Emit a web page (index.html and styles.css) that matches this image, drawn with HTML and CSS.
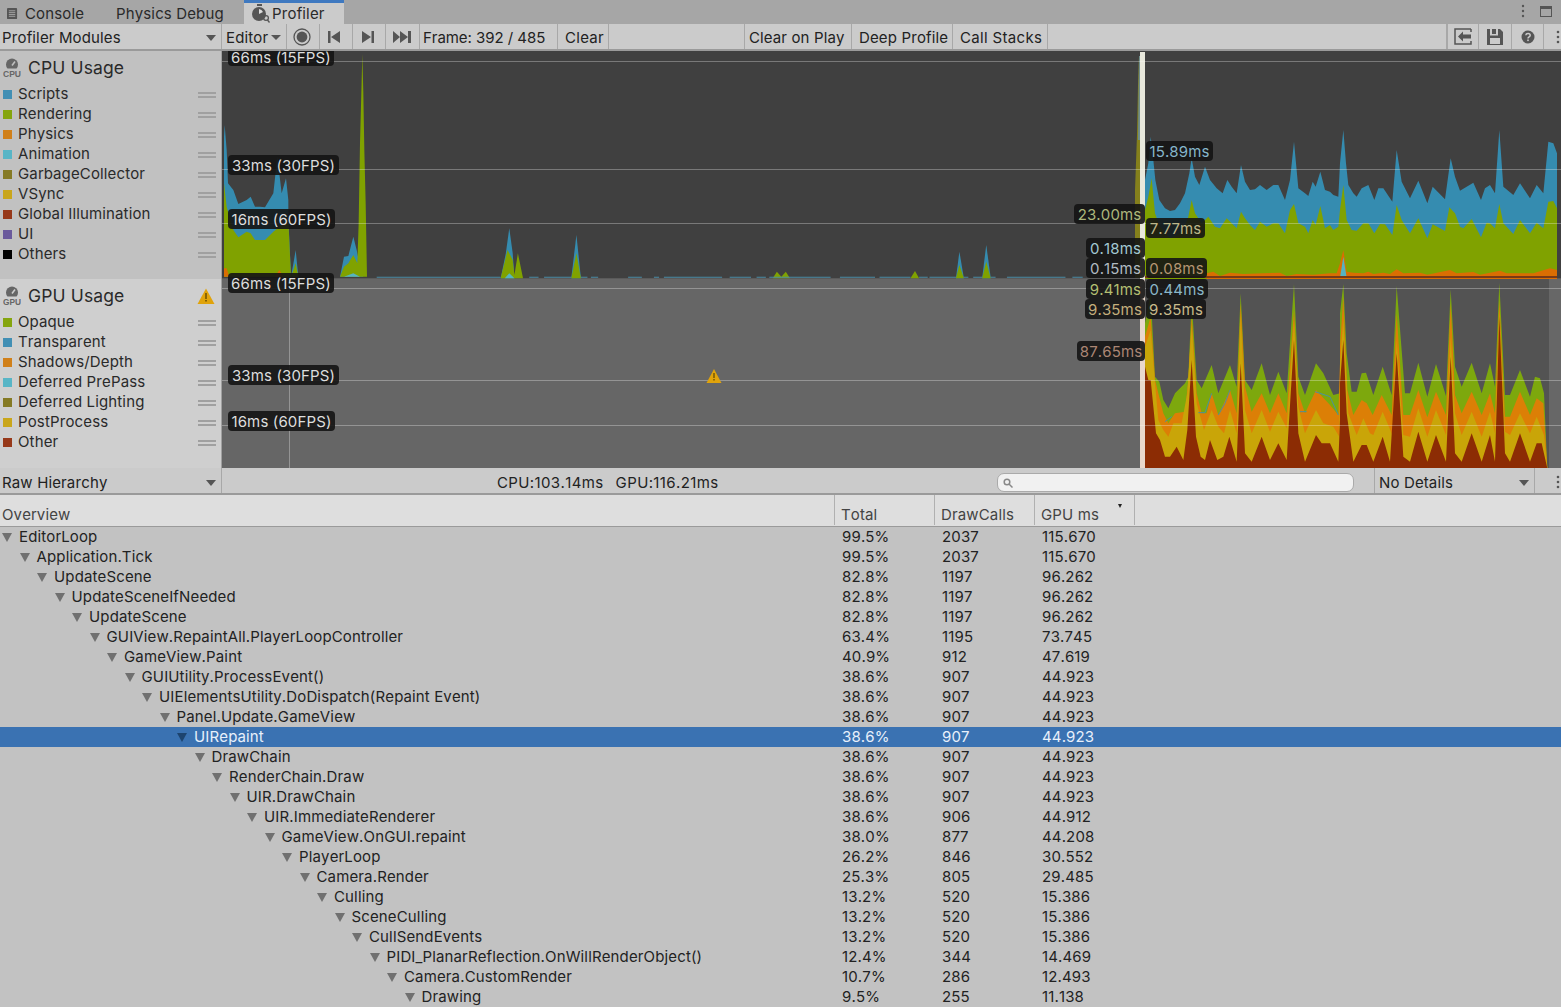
FILE: index.html
```html
<!DOCTYPE html>
<html lang="en">
<head>
<meta charset="utf-8">
<title>Profiler</title>
<link rel="stylesheet" href="styles.css">
</head>
<body>
<div class="tabbar">
  <div class="tab"><svg class="tab-icon" viewBox="0 0 12 13"><rect x="0" y="0" width="11" height="12" rx="1" fill="#555"/><path d="M2 3h7M2 5h7M2 7h7M2 9h7" stroke="#a6a6a6" stroke-width="1"/></svg><span>Console</span></div>
  <div class="tab tab-physics"><span>Physics Debug</span></div>
  <div class="tab tab-active"><svg class="tab-icon-prof" viewBox="0 0 19 19"><path d="M6 0h5v2H6z" fill="#555"/><circle cx="8" cy="10" r="7" fill="#555"/><path d="M8 10V5a5 5 0 0 1 4 3z" fill="#ddd"/><circle cx="15" cy="14" r="2.4" fill="none" stroke="#555" stroke-width="1.3"/><path d="M16.5 16l2 2.5" stroke="#555" stroke-width="1.3"/></svg><span>Profiler</span></div>
  <div class="tab-tools">
    <svg class="kebab" viewBox="0 0 4 14"><circle cx="2" cy="2" r="1.2"/><circle cx="2" cy="7" r="1.2"/><circle cx="2" cy="12" r="1.2"/></svg>
    <svg class="winicon" viewBox="0 0 12 11"><rect x=".5" y=".5" width="11" height="10" fill="none" stroke="#555"/><rect x="0" y="0" width="12" height="3" fill="#555"/></svg>
  </div>
</div>

<div class="toolbar top-toolbar">
  <div class="tb-cell modules">Profiler Modules<i class="caret"></i></div>
  <div class="tb-cell editor">Editor<i class="caret caret-sm"></i></div>
  <div class="tb-cell icon w33 nudge-1"><svg width="20" height="20" viewBox="0 0 20 20"><circle cx="10" cy="10" r="8" fill="none" stroke="#555" stroke-width="1.3"/><circle cx="10" cy="10" r="5.4" fill="#555"/></svg></div>
  <div class="tb-cell icon w33 nudge-2"><svg width="14" height="12" viewBox="0 0 14 12"><path d="M1 0h2.5v12H1zM13 0v12L4 6z" fill="#555"/></svg></div>
  <div class="tb-cell icon w33 nudge-1"><svg width="14" height="12" viewBox="0 0 14 12"><path d="M1 0v12l9-6zM10.5 0H13v12h-2.500z" fill="#555"/></svg></div>
  <div class="tb-cell icon w34"><svg width="19" height="12" viewBox="0 0 19 12"><path d="M0 0v12l7-6zM7 0v12l8-6zM15 0h3v12h-3z" fill="#555"/></svg></div>
  <div class="tb-cell frame">Frame: 392 / 485</div>
  <div class="tb-cell clear">Clear</div>
  <div class="tb-fill tb-gap"></div>
  <div class="tb-cell clearplay">Clear on Play</div>
  <div class="tb-cell deep">Deep Profile</div>
  <div class="tb-cell calls">Call Stacks</div>
  <div class="tb-fill"></div>
  <div class="tb-cell icon w31 first-icon"><svg width="18" height="17" viewBox="0 0 18 17"><path d="M17 1H1v15h16v-3M17 4V1" fill="none" stroke="#555" stroke-width="1.500"/><path d="M4 8.500l5-5v3h8v4H9v3z" fill="#555"/></svg></div>
  <div class="tb-cell icon w33"><svg width="16" height="16" viewBox="0 0 16 16"><path d="M0 0h13l3 3v13H0z" fill="#555"/><path d="M3 0h2v5h4V0h2v6.500H3zM3 9h10v6H3z" fill="#cbcbcb"/></svg></div>
  <div class="tb-cell icon w32"><svg width="14" height="14" viewBox="0 0 14 14"><circle cx="7" cy="7" r="6.500" fill="#555"/><path d="M4.800 5.200C5 3 9.200 3 9.200 5.300 9.200 7 7 6.800 7 8.500" fill="none" stroke="#cbcbcb" stroke-width="1.500"/><rect x="6.200" y="9.500" width="1.600" height="1.600" fill="#cbcbcb"/></svg></div>
  <div class="tb-end"><svg class="kebab" viewBox="0 0 4 14"><circle cx="2" cy="2" r="1.300"/><circle cx="2" cy="7" r="1.300"/><circle cx="2" cy="12" r="1.300"/></svg></div>
</div>

<div class="module module-cpu">
  <aside class="legend legend-cpu">
    <h2 class="legend-title"><svg class="chip" viewBox="0 0 18 19"><path d="M4.500 10.500a6 6 0 1 1 9 0z" fill="#666"/><path d="M9 7.500l3-4" stroke="#c0c0c0" stroke-width="1.600"/><text x="0" y="18.500" class="chip-text" textLength="18" lengthAdjust="spacingAndGlyphs">CPU</text></svg>CPU Usage</h2>
    <ul class="legend-list">
      <li><i class="sw c-blue"></i>Scripts<b class="grip"></b></li>
      <li><i class="sw c-green"></i>Rendering<b class="grip"></b></li>
      <li><i class="sw c-orange"></i>Physics<b class="grip"></b></li>
      <li><i class="sw c-teal"></i>Animation<b class="grip"></b></li>
      <li><i class="sw c-olive"></i>GarbageCollector<b class="grip"></b></li>
      <li><i class="sw c-yellow"></i>VSync<b class="grip"></b></li>
      <li><i class="sw c-red"></i>Global Illumination<b class="grip"></b></li>
      <li><i class="sw c-purple"></i>UI<b class="grip"></b></li>
      <li><i class="sw c-black"></i>Others<b class="grip"></b></li>
    </ul>
  </aside>
  <div class="chart chart-clip">
    <svg class="chart-svg" viewBox="222 51 1339 228" preserveAspectRatio="none">
      <rect x="222" y="51" width="1339" height="228" fill="#404040"/>
      <rect x="222" y="278" width="1339" height="1" fill="#5a5a5a"/>
      <g transform="translate(220 50) scale(.33333)">
        <polygon class="f-blue" points="12,680 12,260 14,225 20,300 24,400 40,420 55,462 80,450 92,440 105,470 120,470 135,472 160,430 172,320 185,430 198,385 205,450 205,500 213,680 222,630 227,600 235,680"/>
        <polygon class="f-blue" points="360,680 372,620 385,618 400,560 410,600 418,640 430,680"/>
        <polygon class="f-green" points="12,680 12,400 20,470 40,540 55,562 80,545 92,550 105,570 135,570 160,545 205,510 213,680 222,655 227,640 235,680"/>
        <polygon class="f-green" points="360,680 372,650 385,640 400,615 412,640 416,520 420,280 424,130 427,12 430,130 433,300 437,460 441,680"/>
        <polygon class="f-orange" points="12,680 12,655 20,655 28,680"/>
        <polygon class="f-orange" points="165,680 178,660 190,680"/>
        <polygon class="f-teal" points="372,680 400,670 420,680"/>
      </g>
      <g transform="translate(480 220) scale(.3444 .33333)">
        <polygon class="f-blue" points="60,175 75,100 85,25 95,100 100,175"/>
        <polygon class="f-green" points="60,175 80,90 95,120 100,165 110,100 125,175"/>
        <polygon class="f-teal" points="72,175 85,160 100,175"/>
        <polygon class="f-blue" points="265,175 280,45 293,175"/>
        <polygon class="f-green" points="265,175 280,100 293,175"/>
        <polygon class="f-green" points="850,175 862,155 875,170 888,155 900,175"/>
        <polygon class="f-green" points="1250,175 1263,153 1275,175"/>
        <polygon class="f-blue" points="1382,175 1392,95 1405,175"/>
        <polygon class="f-green" points="1382,175 1392,135 1405,175"/>
        <polygon class="f-blue" points="1458,175 1470,75 1483,175"/>
        <polygon class="f-green" points="1458,175 1470,125 1483,175"/>
        <path class="s-blue" d="M-300 172H60M143 172H170M186 172H265M293 172H312M322 172H343M430 172H470M505 172H520M534 172H703M725 172H787M803 172H830M840 172H1018M1045 172H1147M1160 172H1250M1275 172H1300M1305 172H1382M1405 172H1418M1432 172H1458M1483 172H1497M1530 172H1700M1720 172H1750"/>
      </g>
      <polygon points="1135,278 1135,190 1137,135 1138,85 1139,56 1140,56 1140,278" fill="#85801c"/>
      <polygon points="1138,140 1139,56 1140,56 1140,140" fill="#6f8d8c"/>
      <g transform="translate(1130 130) scale(.33333)">
        <polygon class="f-blue" points="45,450 45,150 55,100 62,20 70,90 76,150 88,210 105,235 120,243 135,240 150,220 165,190 178,130 185,85 195,140 208,165 225,110 240,150 260,175 278,190 292,150 305,170 320,190 333,105 345,155 360,180 375,178 390,165 410,180 430,165 445,165 465,210 480,150 492,35 505,175 525,190 535,198 548,155 557,170 571,125 585,180 600,185 610,195 625,200 630,100 630,450"/>
        <polygon class="f-green" points="45,450 45,240 55,200 65,145 75,250 90,290 120,325 140,315 160,300 175,260 185,210 195,250 215,280 235,260 255,290 270,295 290,265 305,280 320,295 333,245 345,265 360,285 375,300 390,275 410,290 430,280 445,280 465,310 480,240 492,222 505,280 525,290 535,310 548,270 557,285 571,228 585,295 600,285 610,300 625,290 630,240 630,450"/>
        <polygon class="f-orange" points="45,450 230,450 230,430 250,425 270,438 300,428 340,432 400,430 450,428 470,438 500,432 550,434 600,430 620,430 630,400 630,450"/>
      </g>
      <g transform="translate(1340 130) scale(.33333)">
        <polygon class="f-blue" points="0,450 0,100 10,0 18,100 25,165 40,190 50,200 65,175 85,165 103,210 115,175 130,175 157,215 170,60 185,155 210,205 235,152 262,220 278,170 315,208 332,85 345,140 360,182 400,158 423,210 435,175 450,165 465,190 478,0 490,170 520,195 540,160 570,205 590,165 610,190 625,35 640,40 651,70 651,450"/>
        <polygon class="f-green" points="0,450 0,240 10,165 20,270 35,300 50,302 70,280 85,280 103,310 120,282 135,283 157,315 170,225 185,270 210,310 235,265 262,325 278,283 315,303 328,232 345,250 360,290 370,295 395,267 423,322 440,278 450,280 465,295 478,222 490,280 520,312 540,270 570,310 590,278 610,295 625,215 640,213 651,235 651,450"/>
        <polygon class="f-orange" points="0,450 0,400 10,360 20,425 40,428 70,430 85,425 100,432 130,428 150,432 170,418 190,430 240,428 262,434 330,420 350,430 400,426 420,434 480,422 500,430 580,430 630,415 651,420 651,450"/>
        <polygon class="f-teal" points="0,443 10,380 20,443"/>
      </g>
      <rect x="1145" y="276" width="412" height="2" fill="#7a3a14"/>
      <rect x="1140" y="52" width="5" height="227" fill="#e8e8dc"/>
      <path class="gridline" d="M222 61.500H1561M222 169.500H1561M222 223.500H1561"/>
    </svg>
    <span class="tag tag-fps t-a">66ms (15FPS)</span>
    <span class="tag tag-fps t-b">33ms (30FPS)</span>
    <span class="tag tag-fps t-c">16ms (60FPS)</span>
    <span class="tag v1 l-blue">15.89ms</span>
    <span class="tag v2 l-tan">7.77ms</span>
    <span class="tag v3 l-green">23.00ms</span>
    <span class="tag v4 l-cyan">0.18ms</span>
    <span class="tag v5 l-grey">0.15ms</span>
    <span class="tag v6 l-brown">0.08ms</span>
  </div>
</div>

<div class="module module-gpu">
  <aside class="legend legend-gpu">
    <h2 class="legend-title"><svg class="chip" viewBox="0 0 18 19"><path d="M4.500 10.500a6 6 0 1 1 9 0z" fill="#666"/><path d="M9 7.500l3-4" stroke="#cecece" stroke-width="1.600"/><text x="0" y="18.500" class="chip-text" textLength="18" lengthAdjust="spacingAndGlyphs">GPU</text></svg>GPU Usage<svg class="warn" viewBox="0 0 18 16"><path d="M9 0.500L17.500 16H.5z" fill="#e0a30b"/><path d="M9 5v6" stroke="#5a4300" stroke-width="1.300"/><rect x="8.300" y="12" width="1.400" height="1.500" fill="#5a4300"/></svg></h2>
    <ul class="legend-list">
      <li><i class="sw c-green"></i>Opaque<b class="grip"></b></li>
      <li><i class="sw c-blue"></i>Transparent<b class="grip"></b></li>
      <li><i class="sw c-orange"></i>Shadows/Depth<b class="grip"></b></li>
      <li><i class="sw c-teal"></i>Deferred PrePass<b class="grip"></b></li>
      <li><i class="sw c-olive"></i>Deferred Lighting<b class="grip"></b></li>
      <li><i class="sw c-yellow"></i>PostProcess<b class="grip"></b></li>
      <li><i class="sw c-red"></i>Other<b class="grip"></b></li>
    </ul>
  </aside>
  <div class="chart">
    <svg class="chart-svg" viewBox="222 279 1339 189" preserveAspectRatio="none">
      <rect x="222" y="279" width="918" height="189" fill="#666"/>
      <rect x="1145" y="279" width="404" height="189" fill="#535353"/>
      <rect x="1549" y="279" width="12" height="189" fill="#676767"/>
      <g transform="translate(1130 280) scale(.33333)">
        <polygon class="f-lime" points="45,565 45,130 62,40 75,290 88,305 100,360 115,385 135,340 165,310 175,290 185,60 200,300 215,325 245,255 265,340 300,255 320,320 332,40 345,300 365,330 395,250 420,345 445,275 470,340 492,12 505,290 525,345 558,250 580,280 610,345 630,340 630,565"/>
        <polygon class="f-orange2" points="45,565 45,170 62,110 75,300 90,360 100,400 115,430 135,400 165,395 175,300 185,110 200,340 215,400 230,400 245,340 265,405 300,330 320,400 332,70 345,320 365,395 395,340 420,400 445,340 470,400 492,90 505,340 525,400 558,330 600,375 625,405 630,250 630,565"/>
        <polygon class="f-gold" points="45,565 45,200 62,150 75,310 85,420 100,450 115,470 130,430 155,430 172,340 185,135 200,370 222,450 245,390 265,440 282,460 300,390 320,460 332,100 345,390 365,460 395,390 420,455 445,395 470,445 492,120 505,380 525,460 558,390 580,430 610,440 628,470 630,300 630,565"/>
        <polygon class="f-rust" points="45,565 45,260 55,300 62,300 72,400 78,460 90,480 105,530 120,530 140,500 160,540 172,450 185,240 198,470 212,530 225,540 240,480 262,540 280,530 298,470 320,545 332,250 345,520 365,545 395,470 420,540 445,490 470,540 492,180 505,460 525,545 558,465 575,490 600,490 625,545 630,420 630,565"/>
        <path class="s-teal" d="M105 425L125 410M205 398H225L245 340M265 405L285 370L300 330M510 395H530M555 335L600 350L625 405"/>
      </g>
      <g transform="translate(1340 280) scale(.33333)">
        <polygon class="f-lime" points="0,565 0,100 10,12 20,220 35,335 50,335 65,280 78,278 100,345 128,260 155,345 170,18 195,340 210,340 235,248 262,350 288,252 318,348 332,28 345,260 365,320 395,248 425,340 450,250 465,320 478,8 495,345 510,345 540,270 570,350 585,290 600,295 612,340 622,565"/>
        <polygon class="f-orange2" points="0,565 0,200 10,50 22,330 40,405 65,360 80,370 98,405 125,345 155,405 170,100 190,405 210,405 235,330 262,412 288,335 318,405 332,70 345,345 365,400 395,335 425,405 450,340 465,400 478,60 495,410 510,410 540,335 570,405 590,355 610,370 622,565"/>
        <polygon class="f-gold" points="0,565 0,250 10,120 25,400 50,465 70,415 90,460 100,465 128,395 157,465 170,180 190,465 210,470 235,385 262,470 288,390 318,465 332,170 345,400 365,465 395,395 425,470 450,395 465,460 478,100 495,455 510,465 540,400 570,460 590,410 612,465 622,565"/>
        <polygon class="f-rust" points="0,565 0,310 10,180 20,400 40,545 65,495 80,495 100,545 128,470 150,545 170,220 190,530 210,545 235,455 262,545 288,465 318,545 332,230 345,520 365,545 395,460 425,545 450,465 465,545 478,110 495,520 510,545 540,460 570,545 590,490 605,490 622,565"/>
      </g>
      <rect x="1140" y="279" width="5" height="189" fill="#e9d8cc"/>
      <path class="gridline" d="M222 288.500H1561M222 380.500H1561M222 425.500H1561M289.500 279V468"/>
      <path d="M714 369l7.500 14h-15z" fill="#e0a30b"/>
      <path d="M714 373v5" stroke="#5a4300" stroke-width="1.200"/>
      <rect x="713.400" y="379" width="1.200" height="1.500" fill="#5a4300"/>
    </svg>
    <span class="tag tag-fps g-a">66ms (15FPS)</span>
    <span class="tag tag-fps g-b">33ms (30FPS)</span>
    <span class="tag tag-fps g-c">16ms (60FPS)</span>
    <span class="tag v7 l-lime">9.41ms</span>
    <span class="tag v8 l-sky">0.44ms</span>
    <span class="tag v9 l-sand">9.35ms</span>
    <span class="tag v10 l-sand2">9.35ms</span>
    <span class="tag v11 l-rust">87.65ms</span>
  </div>
</div>

<div class="toolbar bottom-toolbar">
  <div class="tb-cell modules">Raw Hierarchy<i class="caret"></i></div>
  <div class="stats"><span class="stat-cpu">CPU:103.14ms</span><span class="stat-gpu">GPU:116.21ms</span></div>
  <div class="search"><svg width="10" height="10" viewBox="0 0 10 10"><circle cx="4" cy="4" r="2.800" fill="none" stroke="#888" stroke-width="1.500"/><path d="M6 6l3.500 3.500" stroke="#888" stroke-width="1.500"/></svg></div>
  <div class="tb-cell details">No Details<i class="caret"></i></div>
  <div class="tb-end"><svg class="kebab" viewBox="0 0 4 14"><circle cx="2" cy="2" r="1.300"/><circle cx="2" cy="7" r="1.300"/><circle cx="2" cy="12" r="1.300"/></svg></div>
</div>

<div class="table-head">
  <div class="th th-name">Overview</div>
  <div class="th">Total</div>
  <div class="th">DrawCalls</div>
  <div class="th th-sort">GPU ms<i class="sort"></i></div>
</div>

<div class="table-body">
  <div class="row"><div class="name" style="--d:0"><i class="arrow"></i>EditorLoop</div><div>99.5%</div><div>2037</div><div>115.670</div></div>
  <div class="row"><div class="name" style="--d:1"><i class="arrow"></i>Application.Tick</div><div>99.5%</div><div>2037</div><div>115.670</div></div>
  <div class="row"><div class="name" style="--d:2"><i class="arrow"></i>UpdateScene</div><div>82.8%</div><div>1197</div><div>96.262</div></div>
  <div class="row"><div class="name" style="--d:3"><i class="arrow"></i>UpdateSceneIfNeeded</div><div>82.8%</div><div>1197</div><div>96.262</div></div>
  <div class="row"><div class="name" style="--d:4"><i class="arrow"></i>UpdateScene</div><div>82.8%</div><div>1197</div><div>96.262</div></div>
  <div class="row"><div class="name" style="--d:5"><i class="arrow"></i>GUIView.RepaintAll.PlayerLoopController</div><div>63.4%</div><div>1195</div><div>73.745</div></div>
  <div class="row"><div class="name" style="--d:6"><i class="arrow"></i>GameView.Paint</div><div>40.9%</div><div>912</div><div>47.619</div></div>
  <div class="row"><div class="name" style="--d:7"><i class="arrow"></i>GUIUtility.ProcessEvent()</div><div>38.6%</div><div>907</div><div>44.923</div></div>
  <div class="row"><div class="name" style="--d:8"><i class="arrow"></i>UIElementsUtility.DoDispatch(Repaint Event)</div><div>38.6%</div><div>907</div><div>44.923</div></div>
  <div class="row"><div class="name" style="--d:9"><i class="arrow"></i>Panel.Update.GameView</div><div>38.6%</div><div>907</div><div>44.923</div></div>
  <div class="row row-selected"><div class="name" style="--d:10"><i class="arrow"></i>UIRepaint</div><div>38.6%</div><div>907</div><div>44.923</div></div>
  <div class="row"><div class="name" style="--d:11"><i class="arrow"></i>DrawChain</div><div>38.6%</div><div>907</div><div>44.923</div></div>
  <div class="row"><div class="name" style="--d:12"><i class="arrow"></i>RenderChain.Draw</div><div>38.6%</div><div>907</div><div>44.923</div></div>
  <div class="row"><div class="name" style="--d:13"><i class="arrow"></i>UIR.DrawChain</div><div>38.6%</div><div>907</div><div>44.923</div></div>
  <div class="row"><div class="name" style="--d:14"><i class="arrow"></i>UIR.ImmediateRenderer</div><div>38.6%</div><div>906</div><div>44.912</div></div>
  <div class="row"><div class="name" style="--d:15"><i class="arrow"></i>GameView.OnGUI.repaint</div><div>38.0%</div><div>877</div><div>44.208</div></div>
  <div class="row"><div class="name" style="--d:16"><i class="arrow"></i>PlayerLoop</div><div>26.2%</div><div>846</div><div>30.552</div></div>
  <div class="row"><div class="name" style="--d:17"><i class="arrow"></i>Camera.Render</div><div>25.3%</div><div>805</div><div>29.485</div></div>
  <div class="row"><div class="name" style="--d:18"><i class="arrow"></i>Culling</div><div>13.2%</div><div>520</div><div>15.386</div></div>
  <div class="row"><div class="name" style="--d:19"><i class="arrow"></i>SceneCulling</div><div>13.2%</div><div>520</div><div>15.386</div></div>
  <div class="row"><div class="name" style="--d:20"><i class="arrow"></i>CullSendEvents</div><div>13.2%</div><div>520</div><div>15.386</div></div>
  <div class="row"><div class="name" style="--d:21"><i class="arrow"></i>PIDI_PlanarReflection.OnWillRenderObject()</div><div>12.4%</div><div>344</div><div>14.469</div></div>
  <div class="row"><div class="name" style="--d:22"><i class="arrow"></i>Camera.CustomRender</div><div>10.7%</div><div>286</div><div>12.493</div></div>
  <div class="row"><div class="name" style="--d:23"><i class="arrow"></i>Drawing</div><div>9.5%</div><div>255</div><div>11.138</div></div>
</div>
</body>
</html>
```
FILE: styles.css
```css
* { box-sizing: border-box; }
html, body { margin: 0; padding: 0; height: 100%; }
body { width: 1561px; height: 1007px; overflow: hidden; background: #c2c2c2; color: #222; font-family: Inter, "Liberation Sans", sans-serif; font-size: 15px; line-height: 20px; letter-spacing: .14px; font-kerning: none; }

.tabbar { height: 24px; background: #a6a6a6; display: flex; align-items: stretch; }
.tab { display: flex; align-items: center; color: #2a2a2a; padding-top: 3px; }
.tab:first-child { width: 116px; padding-left: 7px; }
.tab-icon { width: 11px; height: 12px; margin-right: 7px; }
.tab-physics { width: 128px; }
.tab-active { width: 100px; background: #cbcbcb; border-top: 3px solid #3f79c0; margin-top: 0; padding: 0 0 0 7px; }
.tab-icon-prof { width: 19px; height: 19px; margin-right: 2px; }
.tab-tools { margin-left: auto; display: flex; align-items: center; padding-bottom: 2px; }
.kebab { width: 4px; height: 14px; fill: #555; }
.tab-tools .kebab { margin-right: 15px; }
.winicon { width: 12px; height: 11px; margin-right: 9px; }

.toolbar { display: flex; background: #cbcbcb; border-bottom: 2px solid #9a9a9a; }
.top-toolbar { height: 27px; }
.bottom-toolbar { height: 27px; }
.tb-cell { display: flex; align-items: center; border-right: 1px solid #a8a8a8; padding: 2px 0 0 2px; white-space: nowrap; }
.bottom-toolbar .tb-cell { padding-top: 4px; }
.tb-fill { flex: 1; border-right: 1px solid #a8a8a8; }
.tb-gap { flex: 0 0 136px; }
.modules { width: 222px; }
.caret { margin-left: auto; margin-right: 5px; width: 0; height: 0; border-left: 5.500px solid transparent; border-right: 5.500px solid transparent; border-top: 6px solid #555; }
.caret-sm { margin-left: 3px; margin-right: 5px; border-left-width: 5px; border-right-width: 5px; border-top-width: 5px; }
.editor { width: 65px; padding-left: 4px; }
.icon { justify-content: center; padding: 0; }
.nudge-1 { padding-right: 2px; }
.nudge-2 { padding-right: 4px; }
.w33 { width: 33px; } .w34 { width: 34px; } .w31 { width: 31px; } .w32 { width: 32px; }
.frame { width: 138px; padding-left: 3px; letter-spacing: -.05px; }
.clear { width: 51px; padding-left: 7px; letter-spacing: .3px; }
.clearplay { width: 107px; padding-left: 4px; }
.deep { width: 101px; padding-left: 7px; }
.calls { width: 95px; padding-left: 7px; letter-spacing: .35px; }
.first-icon { border-left: 1px solid #a8a8a8; width: 32px; }
.tb-end { width: 17px; display: flex; align-items: center; padding-left: 12px; }

.module { display: flex; }
.module-cpu { height: 228px; }
.module-gpu { height: 189px; }
.legend { width: 222px; border-right: 1px solid #a0a0a0; flex: none; }
.legend-cpu { background: #c1c1c1; }
.legend-gpu { background: #cfcfcf; }
.legend-title { margin: 0; height: 33px; padding: 0 6px 0 3px; display: flex; align-items: center; font-size: 17.500px; font-weight: 400; color: #2a2a2a; }
.chip { width: 18px; height: 19px; margin-right: 7px; flex: none; }
.chip-text { font-family: "Liberation Sans", sans-serif; font-size: 8.500px; font-weight: 700; fill: #666; letter-spacing: 0; }
.warn { width: 18px; height: 16px; margin-left: auto; }
.legend-list { list-style: none; margin: 0; padding: 0; }
.legend-list li { height: 20px; display: flex; align-items: center; padding-left: 3px; color: #2a2a2a; }
.sw { width: 9px; height: 9px; margin-right: 6px; flex: none; }
.grip { margin: 2px 5px 0 auto; width: 18px; height: 6px; border-top: 2px solid #a0a0a0; border-bottom: 2px solid #a0a0a0; }
.c-blue { background: #428fb4; } .c-green { background: #85a50f; } .c-orange { background: #d0801a; }
.c-teal { background: #58b5c6; } .c-olive { background: #857a25; } .c-yellow { background: #c9a61c; }
.c-red { background: #97391a; } .c-purple { background: #6a5a9c; } .c-black { background: #000; }

.chart { position: relative; flex: 1; }
.chart-clip { overflow: hidden; }
.chart-svg { display: block; width: 100%; height: 100%; }
.gridline { stroke: #fff; stroke-opacity: .3; stroke-width: 1; fill: none; }
.f-blue { fill: #358cb0; } .f-green { fill: #80a200; } .f-orange { fill: #da6e02; } .f-teal { fill: #55b3c2; }
.f-lime { fill: #7da80d; } .f-orange2 { fill: #dc7f06; } .f-gold { fill: #c9a508; } .f-rust { fill: #8c2c04; }
.s-blue { stroke: #4a8ba5; stroke-width: 3; fill: none; }
.s-teal { stroke: #4d8f9e; stroke-width: 3; fill: none; }

.tag { position: absolute; background: rgba(20,20,20,.9); border-radius: 4px; height: 20px; line-height: 22px; white-space: nowrap; color: #dedede; text-align: center; }
.tag-fps { left: 6px; }
.t-a { top: -4px; width: 106px; height: 19px; line-height: 21px; } .t-b { top: 104px; width: 111px; } .t-c { top: 158px; width: 107px; }
.g-a { top: -6px; width: 106px; } .g-b { top: 86px; width: 111px; } .g-c { top: 132px; width: 107px; }
.v1 { left: 924px; top: 90px; width: 67px; } .v2 { left: 924px; top: 167px; width: 59px; }
.v3 { left: 852px; top: 153px; width: 71px; } .v4 { left: 864px; top: 187px; width: 59px; }
.v5 { left: 864px; top: 207px; width: 59px; } .v6 { left: 924px; top: 207px; width: 61px; }
.v7 { left: 864px; top: 0; width: 59px; } .v8 { left: 924px; top: 0; width: 62px; }
.v9 { left: 863px; top: 20px; width: 60px; } .v10 { left: 924px; top: 20px; width: 60px; }
.v11 { left: 855px; top: 62px; width: 68px; }
.l-blue { color: #86b6cb; } .l-tan { color: #bdb78a; } .l-green { color: #adb77c; } .l-cyan { color: #a3c9d3; }
.l-grey { color: #b1bbc2; } .l-brown { color: #b59672; } .l-lime { color: #b3bf72; } .l-sky { color: #8ab7c8; }
.l-sand { color: #c4af7c; } .l-sand2 { color: #c8bb8c; } .l-rust { color: #ab8674; }

.stats { width: 775px; padding: 4px 0 0 275px; display: flex; align-items: center; gap: 12px; letter-spacing: .38px; }
.search { width: 357px; height: 19px; align-self: flex-start; margin-top: 5px; background: #f1f1f1; border: 1px solid #aaa; border-radius: 7px; display: flex; align-items: center; padding-left: 5px; }
.details { width: 161px; margin-left: 20px; border-left: 1px solid #a8a8a8; padding-left: 4px; }
.bottom-toolbar .tb-end { margin-left: 9px; padding-top: 2px; }

.table-head { height: 32px; background: #dedede; border-bottom: 1px solid #9a9a9a; display: grid; grid-template-columns: 834px 100px 100px 101px; }
.th { position: relative; color: #444; padding: 10px 0 0 6px; border-left: 1px solid #b0b0b0; margin-bottom: 1px; }
.th-name { border-left: 0; padding-left: 2px; }
.th-sort { border-right: 1px solid #b0b0b0; }
.sort { position: absolute; right: 12px; top: 9px; width: 0; height: 0; border-left: 2.500px solid transparent; border-right: 2.500px solid transparent; border-top: 4px solid #222; }

.table-body { background: #c2c2c2; }
.row { height: 20px; display: grid; grid-template-columns: 835px 100px 100px 1fr; color: #222; }
.row > div:not(.name) { padding-left: 7px; }
.name { display: flex; align-items: center; padding-left: calc(2px + var(--d) * 17.500px); white-space: nowrap; }
.arrow { flex: none; width: 0; height: 0; margin-right: 7px; border-left: 5px solid transparent; border-right: 5px solid transparent; border-top: 9px solid #707070; }
.row-selected { background: #3a72b2; color: #e8f0fb; }
.row-selected .arrow { border-top-color: #1d446f; }
```
